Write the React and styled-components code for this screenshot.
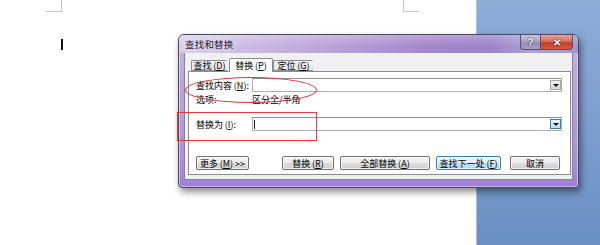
import React from "react";
import styled, { createGlobalStyle } from "styled-components";

const GlobalStyle = createGlobalStyle`
  html, body {
    margin: 0;
    padding: 0;
    width: 600px;
    height: 245px;
    overflow: hidden;
    background: #fff;
  }
`;

const Desktop = styled.div`
  position: relative;
  display: flex;
  width: 600px;
  height: 245px;
  font-family: "Noto Sans CJK SC", "Liberation Sans", sans-serif;
  font-size: 9px;
  color: #000;
`;

const DocArea = styled.div`
  position: relative;
  flex: 0 0 476px;
  background: #fff;
  border-right: 1px solid #b8bcc4;
`;

const SidePane = styled.div`
  flex: 1;
  background: linear-gradient(180deg, #8eacd8 0%, #7e9ecf 50%, #6a8fc2 100%);
`;

const CornerMark = styled.div`
  position: absolute;
  top: 0;
  left: ${(p) => (p.side === "left" ? "46px" : "403px")};
  width: 15px;
  height: 11px;
  border-bottom: 1px solid #c4c4c4;
  ${(p) =>
    p.side === "left"
      ? "border-right: 1px solid #c4c4c4;"
      : "border-left: 1px solid #c4c4c4;"}
`;

const Caret = styled.div`
  position: absolute;
  left: 61px;
  top: 39px;
  width: 2px;
  height: 11px;
  background: #111;
`;

const Dialog = styled.div`
  position: absolute;
  left: 178px;
  top: 34px;
  width: 401px;
  height: 154px;
  box-sizing: border-box;
  display: flex;
  flex-direction: column;
  padding: 0 6px 7px 6px;
  border: 1px solid #4d465e;
  border-radius: 6px 6px 4px 4px;
  background: linear-gradient(180deg, #c7b4e0 0%, #b9a2db 40%, #ab8dd8 85%, #9f80d8 100%);
  box-shadow: 2px 4px 7px rgba(0, 0, 0, 0.45), inset 0 0 0 1px rgba(255, 255, 255, 0.45);
`;

const TitleBar = styled.div`
  display: flex;
  align-items: flex-start;
  height: 21px;
  margin: 0 -6px;
  padding: 0 5px 0 6px;
  border-radius: 5px 5px 0 0;
  background:
    linear-gradient(180deg, rgba(255, 255, 255, 0.25), rgba(255, 255, 255, 0) 60%),
    linear-gradient(90deg, #dacfeb 0%, #cbbae3 18%, #b8a0d8 40%, #a487cc 62%, #9d82c8 78%, #a9a2d2 88%, #a596cc 100%);
`;

const Caption = styled.span`
  align-self: center;
  font-size: 9.5px;
  color: #1a1a1a;
  letter-spacing: 0.2px;
  text-shadow: 0 0 6px rgba(255, 255, 255, 0.9);
`;

const Controls = styled.div`
  display: flex;
  margin-left: auto;
`;

const CaptionButton = styled.div`
  display: flex;
  align-items: center;
  justify-content: center;
  width: ${(p) => p.w}px;
  height: 15px;
  box-sizing: border-box;
  border: 1px solid #5b4f6e;
  border-top: none;
  color: #fff;
  font-family: "Liberation Sans", sans-serif;
  font-weight: bold;
  font-size: 10px;
  text-shadow: 0 0 2px #333, 0 0 1px #222;
  background: ${(p) =>
    p.close
      ? "linear-gradient(180deg, #e6a79b 0%, #d7705f 45%, #c2402c 55%, #d45a3f 100%)"
      : "linear-gradient(180deg, #cdc3dc 0%, #ada2c6 45%, #958ab3 55%, #a79dc6 100%)"};
  border-radius: ${(p) => (p.close ? "0 0 4px 0" : "0 0 0 4px")};
  ${(p) => (p.close ? "border-left: none;" : "")}
`;

const Client = styled.div`
  flex: 1;
  display: flex;
  flex-direction: column;
  padding: 5px 1px 4px 3px;
  background: #f0f0f0;
  border: 1px solid #8a7ea8;
  border-top: none;
  margin: 0 -1px;
`;

const Tabs = styled.div`
  display: flex;
  align-items: flex-end;
  height: 13px;
  padding-left: 3px;
  position: relative;
  z-index: 1;
`;

const Tab = styled.div`
  display: flex;
  align-items: center;
  justify-content: center;
  box-sizing: border-box;
  width: ${(p) => p.w}px;
  height: ${(p) => (p.active ? 14 : 11)}px;
  margin-left: ${(p) => p.gap || 0}px;
  margin-bottom: ${(p) => (p.active ? -1 : 0)}px;
  border: 1px solid #898c95;
  border-bottom: ${(p) => (p.active ? "none" : "1px solid #898c95")};
  ${(p) => (p.active ? "" : "border-right: none;")}
  border-radius: 2px 2px 0 0;
  background: ${(p) => (p.active ? "#fff" : "linear-gradient(180deg, #f3f3f3, #e5e5e5)")};
  white-space: nowrap;
`;

const Panel = styled.div`
  height: 104px;
  box-sizing: border-box;
  display: flex;
  flex-direction: column;
  padding: 6px 8px 0 7px;
  background: #fff;
  border: 1px solid #898c95;
`;

const Row = styled.div`
  display: flex;
  align-items: center;
  height: ${(p) => p.h || 14}px;
  margin-top: ${(p) => p.mt || 0}px;
  white-space: nowrap;
`;

const Label = styled.span`
  flex: 0 0 56px;
`;

const Combo = styled.div`
  flex: 1;
  height: 14px;
  box-sizing: border-box;
  display: flex;
  align-items: center;
  border: 1px solid #abadb3;
  border-top-color: #8e9099;
  background: #fff;
`;

const TextCaret = styled.div`
  width: 1px;
  height: 9px;
  margin-left: 1px;
  background: #111;
`;

const DropButton = styled.div`
  display: flex;
  align-items: center;
  justify-content: center;
  width: 11px;
  height: 10px;
  box-sizing: border-box;
  margin-left: auto;
  border: 1px solid ${(p) => (p.hot ? "#3c7fb1" : "#a8a8a8")};
  background: ${(p) =>
    p.hot ? "linear-gradient(180deg, #e5f4fc, #b9e0f6)" : "linear-gradient(180deg, #f2f2f2, #d6d6d6)"};
`;

const Arrow = styled.div`
  width: 0;
  height: 0;
  border-left: 3px solid transparent;
  border-right: 3px solid transparent;
  border-top: 3px solid #111;
`;

const ButtonRow = styled.div`
  display: flex;
  align-items: center;
  height: 14px;
  margin-top: 25px;
  padding-right: 2px;
`;

const Button = styled.div`
  display: flex;
  align-items: center;
  justify-content: center;
  box-sizing: border-box;
  width: ${(p) => p.w}px;
  height: 14px;
  margin-left: ${(p) => (p.auto ? "auto" : `${p.gap || 0}px`)};
  border: 1px solid ${(p) => (p.focus ? "#3c7fb1" : "#707070")};
  border-radius: 2px;
  background: ${(p) =>
    p.focus
      ? "linear-gradient(180deg, #eaf6fd 0%, #d9effc 50%, #bee6fd 51%, #a7d9f5 100%)"
      : "linear-gradient(180deg, #f2f2f2 0%, #ebebeb 50%, #dddddd 51%, #cfcfcf 100%)"};
  box-shadow: inset 0 0 0 1px rgba(255, 255, 255, 0.7);
  white-space: nowrap;
`;

const Ellipse = styled.div`
  position: absolute;
  left: 185px;
  top: 77px;
  width: 132px;
  height: 26px;
  box-sizing: border-box;
  border: 1.5px solid #e3353c;
  border-radius: 50%;
`;

const Highlight = styled.div`
  position: absolute;
  left: 177px;
  top: 112px;
  width: 140px;
  height: 29px;
  box-sizing: border-box;
  border: 1px solid #e8383d;
`;

const Key = ({ k }) => (
  <>
    &thinsp;(<u>{k}</u>)
  </>
);

export default function App() {
  return (
    <>
      <GlobalStyle />
      <Desktop>
        <DocArea>
          <CornerMark side="left" />
          <CornerMark side="right" />
          <Caret />
        </DocArea>
        <SidePane />

        <Dialog>
          <TitleBar>
            <Caption>查找和替换</Caption>
            <Controls>
              <CaptionButton w={21}>?</CaptionButton>
              <CaptionButton w={32} close>
                ✕
              </CaptionButton>
            </Controls>
          </TitleBar>
          <Client>
            <Tabs>
              <Tab w={36}>
                查找<Key k="D" />
              </Tab>
              <Tab w={44} gap={2} active>
                替换<Key k="P" />
              </Tab>
              <Tab w={40}>
                定位<Key k="G" />
              </Tab>
            </Tabs>
            <Panel>
              <Row>
                <Label>
                  查找内容<Key k="N" />:
                </Label>
                <Combo>
                  <DropButton>
                    <Arrow />
                  </DropButton>
                </Combo>
              </Row>
              <Row h={10} mt={2}>
                <Label>选项:</Label>
                <span>区分全/半角</span>
              </Row>
              <Row mt={13}>
                <Label>
                  替换为<Key k="I" />:
                </Label>
                <Combo>
                  <TextCaret />
                  <DropButton hot>
                    <Arrow />
                  </DropButton>
                </Combo>
              </Row>
              <ButtonRow>
                <Button w={53}>
                  更多<Key k="M" />&nbsp;&gt;&gt;
                </Button>
                <Button w={52} auto>
                  替换<Key k="R" />
                </Button>
                <Button w={90} gap={6}>
                  全部替换<Key k="A" />
                </Button>
                <Button w={65} gap={6} focus>
                  查找下一处<Key k="F" />
                </Button>
                <Button w={50} gap={9}>
                  取消
                </Button>
              </ButtonRow>
            </Panel>
          </Client>
        </Dialog>

        <Ellipse />
        <Highlight />
      </Desktop>
    </>
  );
}
